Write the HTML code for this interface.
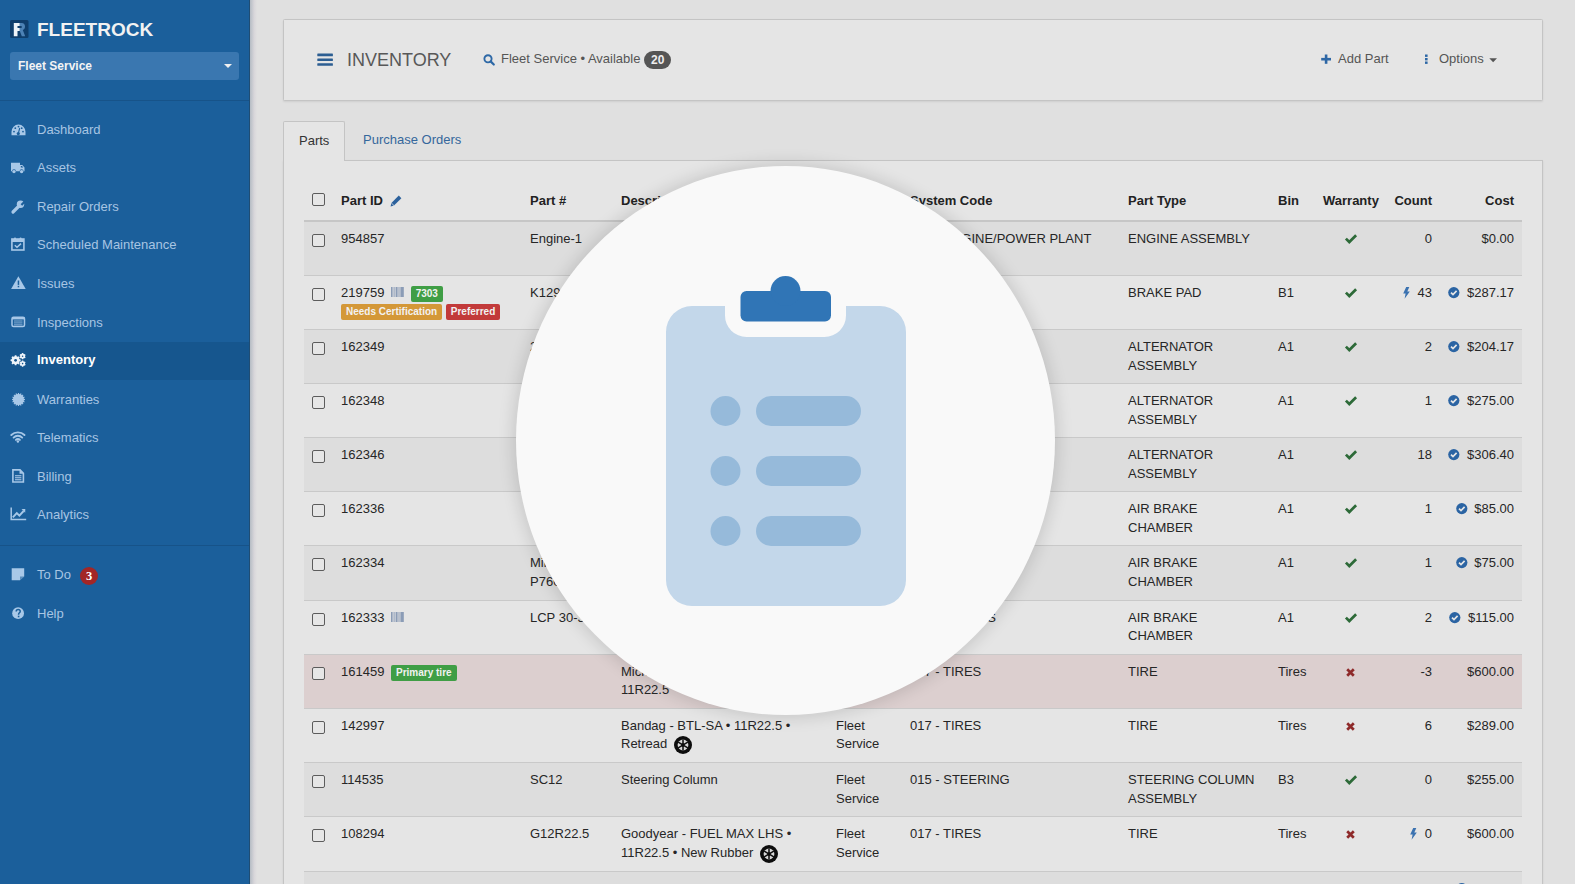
<!DOCTYPE html>
<html><head><meta charset="utf-8">
<style>
*{box-sizing:border-box}
html,body{margin:0;padding:0}
body{width:1575px;height:884px;overflow:hidden;position:relative;background:#e0e0e0;font-family:"Liberation Sans",sans-serif;font-size:13px;color:#2b2b2b}
svg{position:absolute;overflow:visible}
#sb{position:absolute;left:0;top:0;width:250px;height:884px;background:#1b5f9b}
#sbshadow{position:absolute;left:250px;top:0;width:7px;height:884px;background:linear-gradient(to right,#b5bcc4,#d8d6da 60%,#e0e0e0)}
.brand{position:absolute;left:37px;top:19px;font-size:19px;font-weight:bold;color:#f2f2f2}
.dd{position:absolute;left:10px;top:52px;width:229px;height:28px;background:#3a77b0;border-radius:3px}
.dd span{position:absolute;left:8px;top:7px;font-size:12px;font-weight:bold;color:#f4f4f4}
.dd i{position:absolute;right:7px;top:12px;width:0;height:0;border-left:4px solid transparent;border-right:4px solid transparent;border-top:4px solid #f0f0f0}
.hr{position:absolute;left:0;width:250px;height:1px;background:#175389}
.nav{position:absolute;left:0;width:250px;height:38px;color:#a8c5e3;font-size:13px}
.nav .t{position:absolute;left:37px;top:12px}
.nav.act{background:#16568e;color:#fff;font-weight:bold}
.badge3{position:absolute;left:80px;top:12px;width:18px;height:18px;border-radius:50%;background:#a32626;color:#fff;font-size:12.5px;font-weight:bold;text-align:center;line-height:18px;font-family:"Liberation Serif",serif}
#sb svg{z-index:2}
.ic{fill:#a8c8e8}
.icb{fill:none;stroke:#a8c8e8}

#hdr{position:absolute;left:283px;top:19px;width:1260px;height:82px;background:#e5e5e5;border:1px solid #c4c4c4;border-radius:1.5px;box-shadow:0 1px 2px rgba(0,0,0,0.08)}
.title{position:absolute;left:63px;top:30px;font-size:18px;color:#585858}
.srch{position:absolute;left:217px;top:31px;font-size:13px;color:#555}
.cnt{display:inline-block;background:#555;color:#eee;font-weight:bold;font-size:12px;border-radius:9px;padding:0 7px;height:18px;line-height:18px;margin-left:0;vertical-align:-1px}
.addp{position:absolute;left:1054px;top:31px;font-size:13px;color:#555}
.opts{position:absolute;left:1155px;top:31px;font-size:13px;color:#555}

.tab{position:absolute;left:283px;top:121px;width:62px;height:40px;background:#e5e5e5;border:1px solid #c4c4c4;border-bottom:none;border-radius:2px 2px 0 0;font-size:13px;color:#333}
.tab span{position:absolute;left:15px;top:11px}
.tab2{position:absolute;left:363px;top:132px;font-size:13px;color:#35679c}
#panel{position:absolute;left:283px;top:160px;width:1260px;height:740px;background:#e5e5e5;border:1px solid #c4c4c4;border-radius:0;box-shadow:0 1px 2px rgba(0,0,0,0.08)}

table{position:absolute;left:304px;top:179px;width:1218px;border-collapse:collapse;table-layout:fixed}
td,th{padding:8px;vertical-align:top;text-align:left;line-height:18px;font-size:13px}
th{font-weight:bold;color:#222;border-bottom:2px solid #c6c6c6;height:42px;padding-top:13px}
td{border-top:1px solid #c9c9c9;height:54.09px;color:#262626;line-height:18.5714px;padding-bottom:7.9px}
tbody tr:nth-child(odd) td{background:#dddddd}
tr.pink td{background:#dccfcf !important}
.cb{display:inline-block;width:13px;height:13px;border:1px solid #5c5c5c;border-radius:2px;background:#e6e6e6;margin-top:4px}
.lbl{display:inline-block;font-size:10px;font-weight:bold;color:#f2f2f2;border-radius:2px;padding:0 5px;line-height:16px;height:16px;vertical-align:top}
.green{background:#3f9e45}
.orange{background:#d49838}
.red{background:#c23a3a}
.r{text-align:right}
.c{text-align:center}
.ib{display:inline-block;position:relative;vertical-align:top}
.ib svg{position:static}
.l2{display:block;margin-top:1px;white-space:nowrap;line-height:16px;height:16px}

#circle{position:absolute;left:516px;top:166px;width:539px;height:549px;border-radius:50%;background:#f9f9f9;box-shadow:0 0 16px 3px rgba(0,0,0,0.13)}
.ck,.xm,.bo,.cc,.ti,.bc,.pn{position:static;display:inline-block;vertical-align:top}
.ck{margin-top:4px}.xm{margin-top:5px}.bo{margin-top:3px;margin-right:4px}.cc{margin-top:3px;margin-right:3px}.ti{margin-top:1px;margin-left:3px}.bc{margin-top:3px;margin-left:3px}.pn{margin-top:3px;margin-left:3px}
</style></head>
<body>
<div id="sb">
  <svg style="left:10px;top:20px" width="19" height="18" viewBox="0 0 19 18">
    <rect x="0" y="0" width="18.5" height="18" rx="1.5" fill="#0f3e6c"/>
    <path d="M3.8,3 L9.8,3 L9.8,6 L7.5,6 L7.5,8 L9.8,8 L9.8,11 L7.5,11 L7.5,16.3 L3.8,16.3 Z" fill="#eef3f8"/>
    <path d="M9.8,3 L11.5,3 C14,3 15,4.5 15,6.6 C15,8.4 14.2,9.5 12.8,10 L15.2,16.3 L11.8,16.3 L9.8,11 Z M9.8,6 L9.8,8 L11,8 C11.6,8 11.8,7.5 11.8,7 C11.8,6.4 11.6,6 11,6 Z" fill="#4d82b5" fill-rule="evenodd"/>
  </svg>
  <div class="brand">FLEETROCK</div>
  <div class="dd"><span>Fleet Service</span><i></i></div>
  <div class="hr" style="top:100px"></div>

  <!-- dashboard -->
  <svg style="left:11px;top:124px" width="15" height="12" viewBox="0 0 15 12">
    <path class="ic" d="M0.5,11.3 L0.5,7.8 A7,7.3 0 0 1 14.5,7.8 L14.5,11.3 Z"/>
    <g fill="#1b5f9b"><circle cx="3" cy="7.6" r="0.9"/><circle cx="4.3" cy="4.2" r="0.9"/><circle cx="7.5" cy="2.6" r="0.9"/><circle cx="10.7" cy="4.2" r="0.9"/><circle cx="12" cy="7.6" r="0.9"/><circle cx="7.3" cy="9.6" r="1.6"/></g>
    <path d="M7.3,9.6 L8.7,4" stroke="#1b5f9b" stroke-width="1.1"/>
  </svg>
  <!-- truck -->
  <svg style="left:11px;top:162px" width="14" height="12" viewBox="0 0 14 12">
    <path class="ic" d="M0,0.8 L9,0.8 L9,3 L11.3,3 L13.5,5.6 L13.5,9.3 L12.6,9.3 A2,2 0 0 0 8.6,9.3 L5,9.3 A2,2 0 0 0 1,9.3 L0,9.3 Z"/>
    <circle class="ic" cx="3" cy="9.6" r="1.7"/><circle class="ic" cx="10.6" cy="9.6" r="1.7"/>
    <path d="M9.8,4 L11,4 L12.3,5.6 L9.8,5.6 Z" fill="#1b5f9b"/>
  </svg>
  <!-- wrench -->
  <svg style="left:11px;top:200px" width="14" height="14" viewBox="0 0 14 14">
    <path d="M2,12 L7.5,6.5" stroke="#a8c8e8" stroke-width="3.2" stroke-linecap="round"/>
    <circle class="ic" cx="9.5" cy="4.3" r="3.7"/>
    <path d="M9.6,4.2 L13,0.8 L14.5,2.5 L11.2,5.8 Z" fill="#1b5f9b"/>
  </svg>
  <!-- calendar check -->
  <svg style="left:11px;top:237px" width="14" height="14" viewBox="0 0 14 14">
    <rect class="icb" x="0.9" y="2" width="12" height="11" stroke-width="1.6"/>
    <rect class="ic" x="0.9" y="2" width="12" height="3"/>
    <rect class="ic" x="3" y="0.5" width="2" height="3" rx="0.9"/><rect class="ic" x="8.6" y="0.5" width="2" height="3" rx="0.9"/>
    <path class="icb" d="M3.8,8.3 L6,10.3 L10,6.6" stroke-width="1.5"/>
  </svg>
  <!-- warning -->
  <svg style="left:11px;top:276px" width="15" height="13" viewBox="0 0 15 13">
    <path class="ic" d="M7.4,0.3 L14.7,12.9 L0.1,12.9 Z"/>
    <rect x="6.7" y="4.5" width="1.5" height="4.4" fill="#1b5f9b"/><rect x="6.7" y="9.8" width="1.5" height="1.5" fill="#1b5f9b"/>
  </svg>
  <!-- inspections -->
  <svg style="left:11px;top:316px" width="15" height="12" viewBox="0 0 15 12">
    <rect class="icb" x="1" y="1.2" width="12.5" height="9.3" rx="1.5" stroke-width="1.5"/>
    <rect class="ic" x="1" y="1.2" width="12.5" height="2.2"/>
    <g fill="#a8c8e8" opacity="0.75"><rect x="3" y="4.5" width="8.5" height="1"/><rect x="3" y="6.4" width="8.5" height="1"/><rect x="3" y="8.3" width="8.5" height="1"/></g>
  </svg>
  <!-- cogs -->
  <svg style="left:10px;top:353px" width="16" height="14" viewBox="0 0 16 14">
    <path d="M4.64,3.31 L4.80,2.26 L6.40,2.26 L6.56,3.31 L7.74,3.80 L8.60,3.17 L9.73,4.30 L9.10,5.16 L9.59,6.34 L10.64,6.50 L10.64,8.10 L9.59,8.26 L9.10,9.44 L9.73,10.30 L8.60,11.43 L7.74,10.80 L6.56,11.29 L6.40,12.34 L4.80,12.34 L4.64,11.29 L3.46,10.80 L2.60,11.43 L1.47,10.30 L2.10,9.44 L1.61,8.26 L0.56,8.10 L0.56,6.50 L1.61,6.34 L2.10,5.16 L1.47,4.30 L2.60,3.17 L3.46,3.80 Z" fill="#eef4fa"/>
    <path d="M11.83,0.82 L11.87,0.08 L13.33,0.08 L13.37,0.82 L14.27,1.34 L14.93,1.01 L15.66,2.28 L15.05,2.68 L15.05,3.72 L15.66,4.12 L14.93,5.39 L14.27,5.06 L13.37,5.58 L13.33,6.32 L11.87,6.32 L11.83,5.58 L10.93,5.06 L10.27,5.39 L9.54,4.12 L10.15,3.72 L10.15,2.68 L9.54,2.28 L10.27,1.01 L10.93,1.34 Z" fill="#eef4fa"/>
    <path d="M11.83,8.22 L11.87,7.48 L13.33,7.48 L13.37,8.22 L14.27,8.74 L14.93,8.41 L15.66,9.68 L15.05,10.08 L15.05,11.12 L15.66,11.52 L14.93,12.79 L14.27,12.46 L13.37,12.98 L13.33,13.72 L11.87,13.72 L11.83,12.98 L10.93,12.46 L10.27,12.79 L9.54,11.52 L10.15,11.12 L10.15,10.08 L9.54,9.68 L10.27,8.41 L10.93,8.74 Z" fill="#eef4fa"/>
    <g fill="#16568e"><circle cx="5.6" cy="7.3" r="1.4"/><circle cx="12.6" cy="3.2" r="0.8"/><circle cx="12.6" cy="10.6" r="0.8"/></g>
  </svg>
  <!-- certificate -->
  <svg style="left:12px;top:393px" width="13" height="13" viewBox="0 0 12 12">
    <path class="ic" d="M5.50,0.92 L5.41,0.03 L6.59,0.03 L6.50,0.92 L7.48,1.12 L7.74,0.26 L8.83,0.71 L8.40,1.50 L9.24,2.06 L9.81,1.36 L10.64,2.19 L9.94,2.76 L10.50,3.60 L11.29,3.17 L11.74,4.26 L10.88,4.52 L11.08,5.50 L11.97,5.41 L11.97,6.59 L11.08,6.50 L10.88,7.48 L11.74,7.74 L11.29,8.83 L10.50,8.40 L9.94,9.24 L10.64,9.81 L9.81,10.64 L9.24,9.94 L8.40,10.50 L8.83,11.29 L7.74,11.74 L7.48,10.88 L6.50,11.08 L6.59,11.97 L5.41,11.97 L5.50,11.08 L4.52,10.88 L4.26,11.74 L3.17,11.29 L3.60,10.50 L2.76,9.94 L2.19,10.64 L1.36,9.81 L2.06,9.24 L1.50,8.40 L0.71,8.83 L0.26,7.74 L1.12,7.48 L0.92,6.50 L0.03,6.59 L0.03,5.41 L0.92,5.50 L1.12,4.52 L0.26,4.26 L0.71,3.17 L1.50,3.60 L2.06,2.76 L1.36,2.19 L2.19,1.36 L2.76,2.06 L3.60,1.50 L3.17,0.71 L4.26,0.26 L4.52,1.12 Z"/>
  </svg>
  <!-- wifi -->
  <svg style="left:10px;top:431px" width="16" height="12" viewBox="0 0 16 12">
    <g fill="none" stroke="#a8c8e8" stroke-width="1.9" stroke-linecap="round">
      <path d="M1.3,4 A9.5,9.5 0 0 1 14.5,4"/>
      <path d="M3.6,6.6 A6,6 0 0 1 12.2,6.6"/>
      <path d="M5.9,8.9 A2.8,2.8 0 0 1 9.9,8.9"/>
    </g>
    <circle class="ic" cx="7.9" cy="10.5" r="1.2"/>
  </svg>
  <!-- file -->
  <svg style="left:12px;top:469px" width="13" height="14" viewBox="0 0 13 14">
    <path class="icb" d="M0.9,0.9 L8,0.9 L11.4,4.3 L11.4,13 L0.9,13 Z" stroke-width="1.6"/>
    <path class="ic" d="M7.5,0.9 L11.4,4.8 L7.5,4.8 Z"/>
    <g fill="#a8c8e8"><rect x="3" y="6.2" width="6.4" height="1.1"/><rect x="3" y="8.2" width="6.4" height="1.1"/><rect x="3" y="10.2" width="6.4" height="1.1"/></g>
  </svg>
  <!-- chart -->
  <svg style="left:10px;top:507px" width="17" height="14" viewBox="0 0 17 14">
    <path class="icb" d="M1.2,0.5 L1.2,12.6 L16.2,12.6" stroke-width="1.5"/>
    <path class="icb" d="M2.8,10.3 L6.8,6 L9.4,8.6 L13.6,4" stroke-width="1.9"/>
    <path class="ic" d="M11.5,2 L15.3,1.9 L15.2,5.7 Z"/>
  </svg>
  <!-- sticky -->
  <svg style="left:11px;top:568px" width="14" height="13" viewBox="0 0 14 13">
    <path class="ic" d="M0.7,0.3 L13.2,0.3 L13.2,8.5 L9,12.3 L0.7,12.3 Z"/>
    <path d="M9,8.5 L13.2,8.5 L9,12.3 Z" fill="#1b5f9b" opacity="0.55"/>
  </svg>
  <!-- question -->
  <svg style="left:12px;top:607px" width="13" height="13" viewBox="0 0 13 13">
    <circle class="ic" cx="6.1" cy="6.2" r="5.9"/>
    <path d="M4.2,4.6 C4.2,3.3 5,2.6 6.2,2.6 C7.4,2.6 8.2,3.4 8.2,4.4 C8.2,5.7 6.6,5.9 6.6,7.2 L6.6,7.8" fill="none" stroke="#1b5f9b" stroke-width="1.5"/>
    <rect x="5.8" y="8.7" width="1.6" height="1.6" fill="#1b5f9b"/>
  </svg>

  <div class="nav" style="top:110px"><span class="t">Dashboard</span></div>
  <div class="nav" style="top:148px"><span class="t">Assets</span></div>
  <div class="nav" style="top:187px"><span class="t">Repair Orders</span></div>
  <div class="nav" style="top:225px"><span class="t">Scheduled Maintenance</span></div>
  <div class="nav" style="top:264px"><span class="t">Issues</span></div>
  <div class="nav" style="top:303px"><span class="t">Inspections</span></div>
  <div class="nav act" style="top:342px;height:38px"><span class="t" style="top:10px">Inventory</span></div>
  <div class="nav" style="top:380px"><span class="t">Warranties</span></div>
  <div class="nav" style="top:418px"><span class="t">Telematics</span></div>
  <div class="nav" style="top:457px"><span class="t">Billing</span></div>
  <div class="nav" style="top:495px"><span class="t">Analytics</span></div>
  <div class="hr" style="top:545px"></div>
  <div class="nav" style="top:555px"><span class="t">To Do</span><span class="badge3">3</span></div>
  <div class="nav" style="top:594px"><span class="t">Help</span></div>
</div>
<div id="sbshadow"></div>
<div style="position:absolute;left:249px;top:0;width:1px;height:884px;background:#1f4d74"></div>

<div id="hdr">
  <svg style="left:33px;top:33px" width="17" height="14" viewBox="0 0 17 14">
    <g fill="#2c5e92"><rect x="0.3" y="0.6" width="15.6" height="2.6" rx="0.5"/><rect x="0.3" y="5.4" width="15.6" height="2.6" rx="0.5"/><rect x="0.3" y="10.2" width="15.6" height="2.6" rx="0.5"/></g>
  </svg>
  <div class="title">INVENTORY</div>
  <svg style="left:199px;top:34px" width="13" height="12" viewBox="0 0 13 12">
    <circle cx="5" cy="4.8" r="3.6" fill="none" stroke="#2d68a6" stroke-width="1.9"/>
    <path d="M7.6,7.4 L10.8,10.5" stroke="#2d68a6" stroke-width="2.2" stroke-linecap="round"/>
  </svg>
  <div class="srch">Fleet Service • Available <span class="cnt">20</span></div>
  <svg style="left:1037px;top:34px" width="11" height="11" viewBox="0 0 11 11">
    <g fill="#2d67a5"><rect x="3.8" y="0.5" width="2.6" height="9.3"/><rect x="0.2" y="3.9" width="9.8" height="2.6"/></g>
  </svg>
  <div class="addp">Add Part</div>
  <svg style="left:1140px;top:34px" width="5" height="11" viewBox="0 0 5 11">
    <g fill="#2d67a5"><rect x="1" y="0.5" width="2.6" height="2.4"/><rect x="1" y="4" width="2.6" height="2.4"/><rect x="1" y="7.5" width="2.6" height="2.4"/></g>
  </svg>
  <div class="opts">Options</div>
  <svg style="left:1205px;top:38px" width="9" height="5" viewBox="0 0 9 5"><path d="M0.3,0.3 L8,0.3 L4.15,4.2 Z" fill="#555"/></svg>
</div>
<div id="panel"></div>
<div class="tab"><span>Parts</span></div>
<div class="tab2">Purchase Orders</div>
<table>
<colgroup><col style="width:29px"><col style="width:189px"><col style="width:91px"><col style="width:215px"><col style="width:74px"><col style="width:218px"><col style="width:150px"><col style="width:45px"><col style="width:71px"><col style="width:54px"><col style="width:82px"></colgroup>
<thead><tr><th><span class="cb" style="margin-top:1px"></span></th><th>Part ID <svg class="pn" width="12" height="12" viewBox="0 0 12 12"><path d="M8.8,0.6 L11.4,3.2 L4,10.6 L0.6,11.4 L1.4,8 Z" fill="#2c619c"/><path d="M1.4,8 L4,10.6" stroke="#e5e5e5" stroke-width="0.8"/></svg></th><th>Part #</th><th>Description</th><th>Location</th><th>System Code</th><th>Part Type</th><th>Bin</th><th class="c">Warranty</th><th class="r">Count</th><th class="r">Cost</th></tr></thead>
<tbody>
<tr><td><span class="cb"></span></td><td>954857</td><td>Engine-1</td><td>Engine</td><td>Fleet Service</td><td>045 - ENGINE/POWER PLANT</td><td>ENGINE ASSEMBLY</td><td></td><td class="c"><svg class="ck" width="12" height="10" viewBox="0 0 12 10"><path d="M0.9,4.6 L4.3,8 L11.1,1.2" fill="none" stroke="#2d6a38" stroke-width="2.7"/></svg></td><td class="r">0</td><td class="r">$0.00</td></tr>
<tr><td><span class="cb"></span></td><td>219759 <svg class="bc" width="13" height="10" viewBox="0 0 13 10"><g fill="#8b9cb6"><rect x="0" y="0" width="1.6" height="10"/><rect x="2.6" y="0" width="1" height="10"/><rect x="4.6" y="0" width="2" height="10"/><rect x="7.5" y="0" width="1" height="10"/><rect x="9.4" y="0" width="3.4" height="10"/></g></svg> <span class="lbl green" style="margin-left:3px;position:relative;top:2px">7303</span><span class="l2"><span class="lbl orange">Needs Certification</span> <span class="lbl red">Preferred</span></span></td><td>K129</td><td>Brake Pad</td><td>Fleet Service</td><td>013 - BRAKES</td><td>BRAKE PAD</td><td>B1</td><td class="c"><svg class="ck" width="12" height="10" viewBox="0 0 12 10"><path d="M0.9,4.6 L4.3,8 L11.1,1.2" fill="none" stroke="#2d6a38" stroke-width="2.7"/></svg></td><td class="r"><svg class="bo" width="7" height="12" viewBox="0 0 7 12"><path d="M3.2,0 L6.3,0 L4.3,4.6 L6.8,4.6 L1.6,11.8 L2.6,6.6 L0.2,6.6 Z" fill="#3b72b0"/></svg> 43</td><td class="r"><svg class="cc" width="12" height="12" viewBox="0 0 12 12"><circle cx="5.8" cy="5.6" r="5.6" fill="#2b64a3"/><path d="M3,5.6 L5,7.6 L8.6,3.9" fill="none" stroke="#e6e6e6" stroke-width="1.7"/></svg> $287.17</td></tr>
<tr><td><span class="cb"></span></td><td>162349</td><td>2</td><td>Alternator</td><td>Fleet Service</td><td>032 - CHARGING</td><td>ALTERNATOR ASSEMBLY</td><td>A1</td><td class="c"><svg class="ck" width="12" height="10" viewBox="0 0 12 10"><path d="M0.9,4.6 L4.3,8 L11.1,1.2" fill="none" stroke="#2d6a38" stroke-width="2.7"/></svg></td><td class="r">2</td><td class="r"><svg class="cc" width="12" height="12" viewBox="0 0 12 12"><circle cx="5.8" cy="5.6" r="5.6" fill="#2b64a3"/><path d="M3,5.6 L5,7.6 L8.6,3.9" fill="none" stroke="#e6e6e6" stroke-width="1.7"/></svg> $204.17</td></tr>
<tr><td><span class="cb"></span></td><td>162348</td><td></td><td>Alternator</td><td>Fleet Service</td><td>032 - CHARGING</td><td>ALTERNATOR ASSEMBLY</td><td>A1</td><td class="c"><svg class="ck" width="12" height="10" viewBox="0 0 12 10"><path d="M0.9,4.6 L4.3,8 L11.1,1.2" fill="none" stroke="#2d6a38" stroke-width="2.7"/></svg></td><td class="r">1</td><td class="r"><svg class="cc" width="12" height="12" viewBox="0 0 12 12"><circle cx="5.8" cy="5.6" r="5.6" fill="#2b64a3"/><path d="M3,5.6 L5,7.6 L8.6,3.9" fill="none" stroke="#e6e6e6" stroke-width="1.7"/></svg> $275.00</td></tr>
<tr><td><span class="cb"></span></td><td>162346</td><td></td><td>Alternator</td><td>Fleet Service</td><td>032 - CHARGING</td><td>ALTERNATOR ASSEMBLY</td><td>A1</td><td class="c"><svg class="ck" width="12" height="10" viewBox="0 0 12 10"><path d="M0.9,4.6 L4.3,8 L11.1,1.2" fill="none" stroke="#2d6a38" stroke-width="2.7"/></svg></td><td class="r">18</td><td class="r"><svg class="cc" width="12" height="12" viewBox="0 0 12 12"><circle cx="5.8" cy="5.6" r="5.6" fill="#2b64a3"/><path d="M3,5.6 L5,7.6 L8.6,3.9" fill="none" stroke="#e6e6e6" stroke-width="1.7"/></svg> $306.40</td></tr>
<tr><td><span class="cb"></span></td><td>162336</td><td></td><td>Chamber</td><td>Fleet Service</td><td>013 - BRAKES</td><td>AIR BRAKE CHAMBER</td><td>A1</td><td class="c"><svg class="ck" width="12" height="10" viewBox="0 0 12 10"><path d="M0.9,4.6 L4.3,8 L11.1,1.2" fill="none" stroke="#2d6a38" stroke-width="2.7"/></svg></td><td class="r">1</td><td class="r"><svg class="cc" width="12" height="12" viewBox="0 0 12 12"><circle cx="5.8" cy="5.6" r="5.6" fill="#2b64a3"/><path d="M3,5.6 L5,7.6 L8.6,3.9" fill="none" stroke="#e6e6e6" stroke-width="1.7"/></svg> $85.00</td></tr>
<tr><td><span class="cb"></span></td><td>162334</td><td>Mileage P7600</td><td>Chamber</td><td>Fleet Service</td><td>013 - BRAKES</td><td>AIR BRAKE CHAMBER</td><td>A1</td><td class="c"><svg class="ck" width="12" height="10" viewBox="0 0 12 10"><path d="M0.9,4.6 L4.3,8 L11.1,1.2" fill="none" stroke="#2d6a38" stroke-width="2.7"/></svg></td><td class="r">1</td><td class="r"><svg class="cc" width="12" height="12" viewBox="0 0 12 12"><circle cx="5.8" cy="5.6" r="5.6" fill="#2b64a3"/><path d="M3,5.6 L5,7.6 L8.6,3.9" fill="none" stroke="#e6e6e6" stroke-width="1.7"/></svg> $75.00</td></tr>
<tr><td><span class="cb"></span></td><td>162333 <svg class="bc" width="13" height="10" viewBox="0 0 13 10"><g fill="#8b9cb6"><rect x="0" y="0" width="1.6" height="10"/><rect x="2.6" y="0" width="1" height="10"/><rect x="4.6" y="0" width="2" height="10"/><rect x="7.5" y="0" width="1" height="10"/><rect x="9.4" y="0" width="3.4" height="10"/></g></svg></td><td>LCP 30-3</td><td>Chamber</td><td>Fleet Service</td><td>013 - BRAKES</td><td>AIR BRAKE CHAMBER</td><td>A1</td><td class="c"><svg class="ck" width="12" height="10" viewBox="0 0 12 10"><path d="M0.9,4.6 L4.3,8 L11.1,1.2" fill="none" stroke="#2d6a38" stroke-width="2.7"/></svg></td><td class="r">2</td><td class="r"><svg class="cc" width="12" height="12" viewBox="0 0 12 12"><circle cx="5.8" cy="5.6" r="5.6" fill="#2b64a3"/><path d="M3,5.6 L5,7.6 L8.6,3.9" fill="none" stroke="#e6e6e6" stroke-width="1.7"/></svg> $115.00</td></tr>
<tr class="pink"><td><span class="cb"></span></td><td>161459 <span class="lbl green" style="margin-left:3px;position:relative;top:2px">Primary tire</span></td><td></td><td>Michelin - X MULTI ENERGY Z • 11R22.5</td><td>Fleet Service</td><td>017 - TIRES</td><td>TIRE</td><td>Tires</td><td class="c"><svg class="xm" width="9" height="9" viewBox="0 0 9 9"><path d="M1.2,1.2 L7.8,7.8 M7.8,1.2 L1.2,7.8" stroke="#8e2a2a" stroke-width="2.7"/></svg></td><td class="r">-3</td><td class="r">$600.00</td></tr>
<tr><td><span class="cb"></span></td><td>142997</td><td></td><td>Bandag - BTL-SA • 11R22.5 • Retread <svg class="ti" width="18" height="18" viewBox="0 0 18 18"><circle cx="9" cy="9" r="9" fill="#0d0d0d"/><circle cx="9" cy="9" r="5.4" fill="#d8d8d8"/><g stroke="#0d0d0d" stroke-width="1.5"><path d="M9,3.4 L9,14.6 M4.2,6.2 L13.8,11.8 M4.2,11.8 L13.8,6.2"/></g><circle cx="9" cy="9" r="1.8" fill="#0d0d0d"/></svg></td><td>Fleet Service</td><td>017 - TIRES</td><td>TIRE</td><td>Tires</td><td class="c"><svg class="xm" width="9" height="9" viewBox="0 0 9 9"><path d="M1.2,1.2 L7.8,7.8 M7.8,1.2 L1.2,7.8" stroke="#8e2a2a" stroke-width="2.7"/></svg></td><td class="r">6</td><td class="r">$289.00</td></tr>
<tr><td><span class="cb"></span></td><td>114535</td><td>SC12</td><td>Steering Column</td><td>Fleet Service</td><td>015 - STEERING</td><td>STEERING COLUMN ASSEMBLY</td><td>B3</td><td class="c"><svg class="ck" width="12" height="10" viewBox="0 0 12 10"><path d="M0.9,4.6 L4.3,8 L11.1,1.2" fill="none" stroke="#2d6a38" stroke-width="2.7"/></svg></td><td class="r">0</td><td class="r">$255.00</td></tr>
<tr><td><span class="cb"></span></td><td>108294</td><td>G12R22.5</td><td>Goodyear - FUEL MAX LHS • 11R22.5 • New Rubber <svg class="ti" width="18" height="18" viewBox="0 0 18 18"><circle cx="9" cy="9" r="9" fill="#0d0d0d"/><circle cx="9" cy="9" r="5.4" fill="#d8d8d8"/><g stroke="#0d0d0d" stroke-width="1.5"><path d="M9,3.4 L9,14.6 M4.2,6.2 L13.8,11.8 M4.2,11.8 L13.8,6.2"/></g><circle cx="9" cy="9" r="1.8" fill="#0d0d0d"/></svg></td><td>Fleet Service</td><td>017 - TIRES</td><td>TIRE</td><td>Tires</td><td class="c"><svg class="xm" width="9" height="9" viewBox="0 0 9 9"><path d="M1.2,1.2 L7.8,7.8 M7.8,1.2 L1.2,7.8" stroke="#8e2a2a" stroke-width="2.7"/></svg></td><td class="r"><svg class="bo" width="7" height="12" viewBox="0 0 7 12"><path d="M3.2,0 L6.3,0 L4.3,4.6 L6.8,4.6 L1.6,11.8 L2.6,6.6 L0.2,6.6 Z" fill="#3b72b0"/></svg> 0</td><td class="r">$600.00</td></tr>
<tr><td><span class="cb"></span></td><td>100783</td><td>433-1</td><td>Belt</td><td>Fleet Service</td><td>045 - ENGINE/POWER PLANT</td><td>IGNITION TIMING</td><td>B2</td><td class="c"><svg class="ck" width="12" height="10" viewBox="0 0 12 10"><path d="M0.9,4.6 L4.3,8 L11.1,1.2" fill="none" stroke="#2d6a38" stroke-width="2.7"/></svg></td><td class="r">137</td><td class="r"><svg class="cc" width="12" height="12" viewBox="0 0 12 12"><circle cx="5.8" cy="5.6" r="5.6" fill="#2b64a3"/><path d="M3,5.6 L5,7.6 L8.6,3.9" fill="none" stroke="#e6e6e6" stroke-width="1.7"/></svg> $24.00</td></tr>
</tbody></table>
<div id="circle"></div>
<svg style="left:0;top:0" width="1575" height="884" viewBox="0 0 1575 884">
  <path d="M666,332 A26,26 0 0 1 692,306 L725,306 L725,315.5 A21.5,21.5 0 0 0 746.5,337 L824.5,337 A21.5,21.5 0 0 0 846,315.5 L846,306 L880,306 A26,26 0 0 1 906,332 L906,580 A26,26 0 0 1 880,606 L692,606 A26,26 0 0 1 666,580 Z" fill="#c3d7ea"/>
  <rect x="740.5" y="291" width="90.5" height="30.5" rx="6" fill="#3075b6"/>
  <circle cx="785.5" cy="291" r="15" fill="#3075b6"/>
  <g fill="#96bada">
    <circle cx="725.5" cy="411" r="15"/><rect x="756" y="396" width="105" height="30" rx="15"/>
    <circle cx="725.5" cy="471" r="15"/><rect x="756" y="456" width="105" height="30" rx="15"/>
    <circle cx="725.5" cy="531" r="15"/><rect x="756" y="516" width="105" height="30" rx="15"/>
  </g>
</svg>
</body></html>
